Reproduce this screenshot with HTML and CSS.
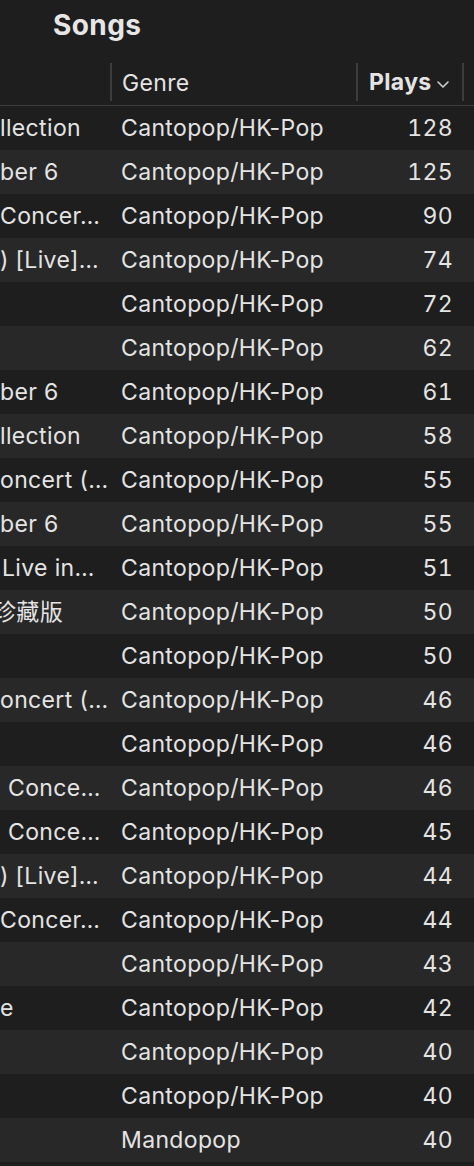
FILE: index.html
```html
<!DOCTYPE html>
<html lang="en">
<head>
    <meta charset="UTF-8">
    <title>Songs</title>
    <link rel="stylesheet" href="styles.css">
</head>
<body>

<div class="page-title">Songs</div>

<div class="song-table">
    <div class="head-row">
        <div class="col-album"></div>
        <div class="col-genre head-cell">Genre</div>
        <div class="col-plays head-cell sorted">
            Plays
            <svg class="chevron" width="14" height="9" viewBox="0 0 14 9">
                <path d="M2 2 L7 7 L12 2" fill="none" stroke="#d0d0d0" stroke-width="1.6" stroke-linecap="round" stroke-linejoin="round"/>
            </svg>
        </div>
        <div class="col-rest"></div>
    </div>

    <div class="row"><div class="col-album">llection</div><div class="col-genre">Cantopop/HK-Pop</div><div class="col-plays">128</div></div>
    <div class="row"><div class="col-album">ber 6</div><div class="col-genre">Cantopop/HK-Pop</div><div class="col-plays">125</div></div>
    <div class="row"><div class="col-album">Concer…</div><div class="col-genre">Cantopop/HK-Pop</div><div class="col-plays">90</div></div>
    <div class="row"><div class="col-album">) [Live]…</div><div class="col-genre">Cantopop/HK-Pop</div><div class="col-plays">74</div></div>
    <div class="row"><div class="col-album"></div><div class="col-genre">Cantopop/HK-Pop</div><div class="col-plays">72</div></div>
    <div class="row"><div class="col-album"></div><div class="col-genre">Cantopop/HK-Pop</div><div class="col-plays">62</div></div>
    <div class="row"><div class="col-album">ber 6</div><div class="col-genre">Cantopop/HK-Pop</div><div class="col-plays">61</div></div>
    <div class="row"><div class="col-album">llection</div><div class="col-genre">Cantopop/HK-Pop</div><div class="col-plays">58</div></div>
    <div class="row"><div class="col-album">oncert (…</div><div class="col-genre">Cantopop/HK-Pop</div><div class="col-plays">55</div></div>
    <div class="row"><div class="col-album">ber 6</div><div class="col-genre">Cantopop/HK-Pop</div><div class="col-plays">55</div></div>
    <div class="row"><div class="col-album indent-small">Live in…</div><div class="col-genre">Cantopop/HK-Pop</div><div class="col-plays">51</div></div>
    <div class="row"><div class="col-album cut-cjk">珍藏版</div><div class="col-genre">Cantopop/HK-Pop</div><div class="col-plays">50</div></div>
    <div class="row"><div class="col-album"></div><div class="col-genre">Cantopop/HK-Pop</div><div class="col-plays">50</div></div>
    <div class="row"><div class="col-album">oncert (…</div><div class="col-genre">Cantopop/HK-Pop</div><div class="col-plays">46</div></div>
    <div class="row"><div class="col-album"></div><div class="col-genre">Cantopop/HK-Pop</div><div class="col-plays">46</div></div>
    <div class="row"><div class="col-album indent">Conce…</div><div class="col-genre">Cantopop/HK-Pop</div><div class="col-plays">46</div></div>
    <div class="row"><div class="col-album indent">Conce…</div><div class="col-genre">Cantopop/HK-Pop</div><div class="col-plays">45</div></div>
    <div class="row"><div class="col-album">) [Live]…</div><div class="col-genre">Cantopop/HK-Pop</div><div class="col-plays">44</div></div>
    <div class="row"><div class="col-album">Concer…</div><div class="col-genre">Cantopop/HK-Pop</div><div class="col-plays">44</div></div>
    <div class="row"><div class="col-album"></div><div class="col-genre">Cantopop/HK-Pop</div><div class="col-plays">43</div></div>
    <div class="row"><div class="col-album">e</div><div class="col-genre">Cantopop/HK-Pop</div><div class="col-plays">42</div></div>
    <div class="row"><div class="col-album"></div><div class="col-genre">Cantopop/HK-Pop</div><div class="col-plays">40</div></div>
    <div class="row"><div class="col-album"></div><div class="col-genre">Cantopop/HK-Pop</div><div class="col-plays">40</div></div>
    <div class="row"><div class="col-album"></div><div class="col-genre">Mandopop</div><div class="col-plays">40</div></div>
    <div class="row"><div class="col-album"></div><div class="col-genre"></div><div class="col-plays"></div></div>
</div>

</body>
</html>
```

FILE: styles.css
```css
body {
    font-family: Inter, "Noto Sans CJK TC", sans-serif;
    margin: 0;
    padding: 0;
    background-color: #1e1e1e;
    color: #e4e4e4;
    overflow: hidden;
}

.page-title {
    height: 50px;
    padding-left: 53px;
    font-size: 28px;
    font-weight: bold;
    letter-spacing: 0.4px;
    line-height: 50px;
    color: #e6e6e6;
}

.song-table {
    font-size: 23px;
    letter-spacing: 0.35px;
}

.head-row {
    display: flex;
    height: 55px;
    align-items: flex-end;
    border-bottom: 1px solid #3a3a3a;
}

.head-row > div {
    height: 38px;
    line-height: 40px;
    margin-bottom: 4px;
}

.head-cell {
    border-left: 2px solid #3d3d3d;
}

.col-genre.head-cell {
    margin-left: -1px;
}

.sorted {
    font-weight: bold;
    display: flex;
    align-items: center;
    gap: 4px;
    padding-left: 11px;
}

.col-rest {
    flex: 1;
    border-left: 2px solid #3d3d3d;
}

.chevron {
    margin-top: 4px;
}

.row {
    display: flex;
    height: 44px;
    line-height: 44px;
}

.row:nth-child(odd) {
    background-color: #282828;
}

.col-album {
    width: 111px;
    flex-shrink: 0;
    overflow: hidden;
    white-space: nowrap;
}

.indent {
    padding-left: 8px;
    box-sizing: border-box;
}

.indent-small {
    padding-left: 2px;
    box-sizing: border-box;
}

.cut-cjk {
    text-indent: -7px;
}

.col-genre {
    width: 246px;
    flex-shrink: 0;
    padding-left: 10px;
    box-sizing: border-box;
    white-space: nowrap;
}

.col-plays {
    width: 106px;
    flex-shrink: 0;
    padding-right: 10px;
    box-sizing: border-box;
    text-align: right;
    font-variant-numeric: tabular-nums;
}

.head-row .col-plays {
    text-align: left;
}
```
